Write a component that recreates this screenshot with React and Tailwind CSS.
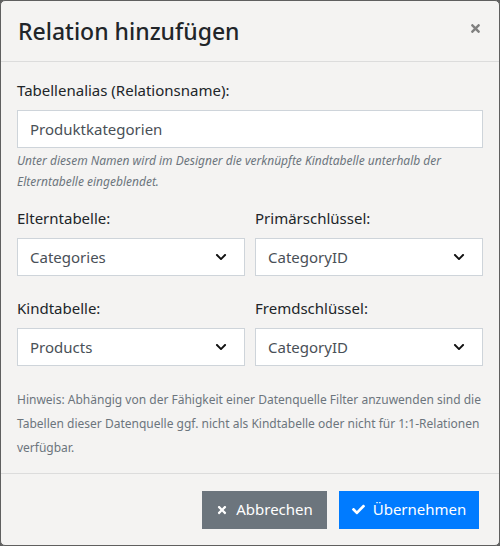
import React from 'react';
import { FaTimes, FaCheck, FaChevronDown } from 'react-icons/fa';

const font = { fontFamily: '"Noto Sans", "Open Sans", sans-serif' };

const Select = ({ value }) => (
  <div className="flex h-[38px] items-center justify-between border border-[#ced4da] bg-white pl-[12px] pr-[17px] text-[15px] text-[#495057]">
    <span>{value}</span>
    <FaChevronDown className="h-[12px] w-[12px] text-[#111]" />
  </div>
);

const Field = ({ label, value }) => (
  <div className="flex flex-col">
    <label className="mb-[9px] text-[15px] leading-[22px] text-[#212529]">{label}</label>
    <Select value={value} />
  </div>
);

const App = () => {
  return (
    <div className="h-[546px] w-[500px] bg-[#5f5f5f]" style={font}>
      <div className="flex h-full flex-col rounded-[5px] border border-[#5f5f5f] bg-[#f4f3f2]">
        {/* Header */}
        <div className="flex h-[61px] shrink-0 items-center justify-between border-b border-[#dcdcdc] pl-[17px] pr-[17px]">
          <h2 className="text-[23px] font-medium text-[#212529]">Relation hinzufügen</h2>
          <FaTimes className="mt-[-6px] h-[13px] w-[13px] text-[#808080]" />
        </div>

        {/* Body */}
        <div className="flex flex-1 flex-col px-[16px] pt-[17px]">
          <label className="mb-[9px] text-[15px] leading-[22px] text-[#212529]">Tabellenalias (Relationsname):</label>
          <div className="flex h-[38px] items-center border border-[#ced4da] bg-white px-[12px] text-[15px] text-[#495057]">
            Produktkategorien
          </div>
          <p className="mt-[2px] text-[12px] italic leading-[21px] text-[#6c757d]">
            Unter diesem Namen wird im Designer die verknüpfte Kindtabelle unterhalb der Elterntabelle eingeblendet.
          </p>

          <div className="mt-[15px] grid grid-cols-2 gap-x-[10px] gap-y-[21px]">
            <Field label="Elterntabelle:" value="Categories" />
            <Field label="Primärschlüssel:" value="CategoryID" />
            <Field label="Kindtabelle:" value="Products" />
            <Field label="Fremdschlüssel:" value="CategoryID" />
          </div>

          <p className="mt-[22px] text-[12px] leading-[24px] text-[#6c757d]">
            Hinweis: Abhängig von der Fähigkeit einer Datenquelle Filter anzuwenden sind die Tabellen dieser Datenquelle ggf. nicht als Kindtabelle oder nicht für 1:1-Relationen verfügbar.
          </p>
        </div>

        {/* Footer */}
        <div className="flex h-[72px] shrink-0 items-center justify-end gap-[12px] border-t border-[#dcdcdc] pr-[20px]">
          <button className="flex h-[38px] w-[125px] items-center justify-center gap-[8px] bg-[#6c757d] text-[15px] text-white">
            <FaTimes className="h-[12px] w-[12px]" />
            Abbrechen
          </button>
          <button className="flex h-[38px] w-[140px] items-center justify-center gap-[8px] bg-[#007bff] text-[15px] text-white">
            <FaCheck className="h-[13px] w-[13px]" />
            Übernehmen
          </button>
        </div>
      </div>
    </div>
  );
};

export default App;
